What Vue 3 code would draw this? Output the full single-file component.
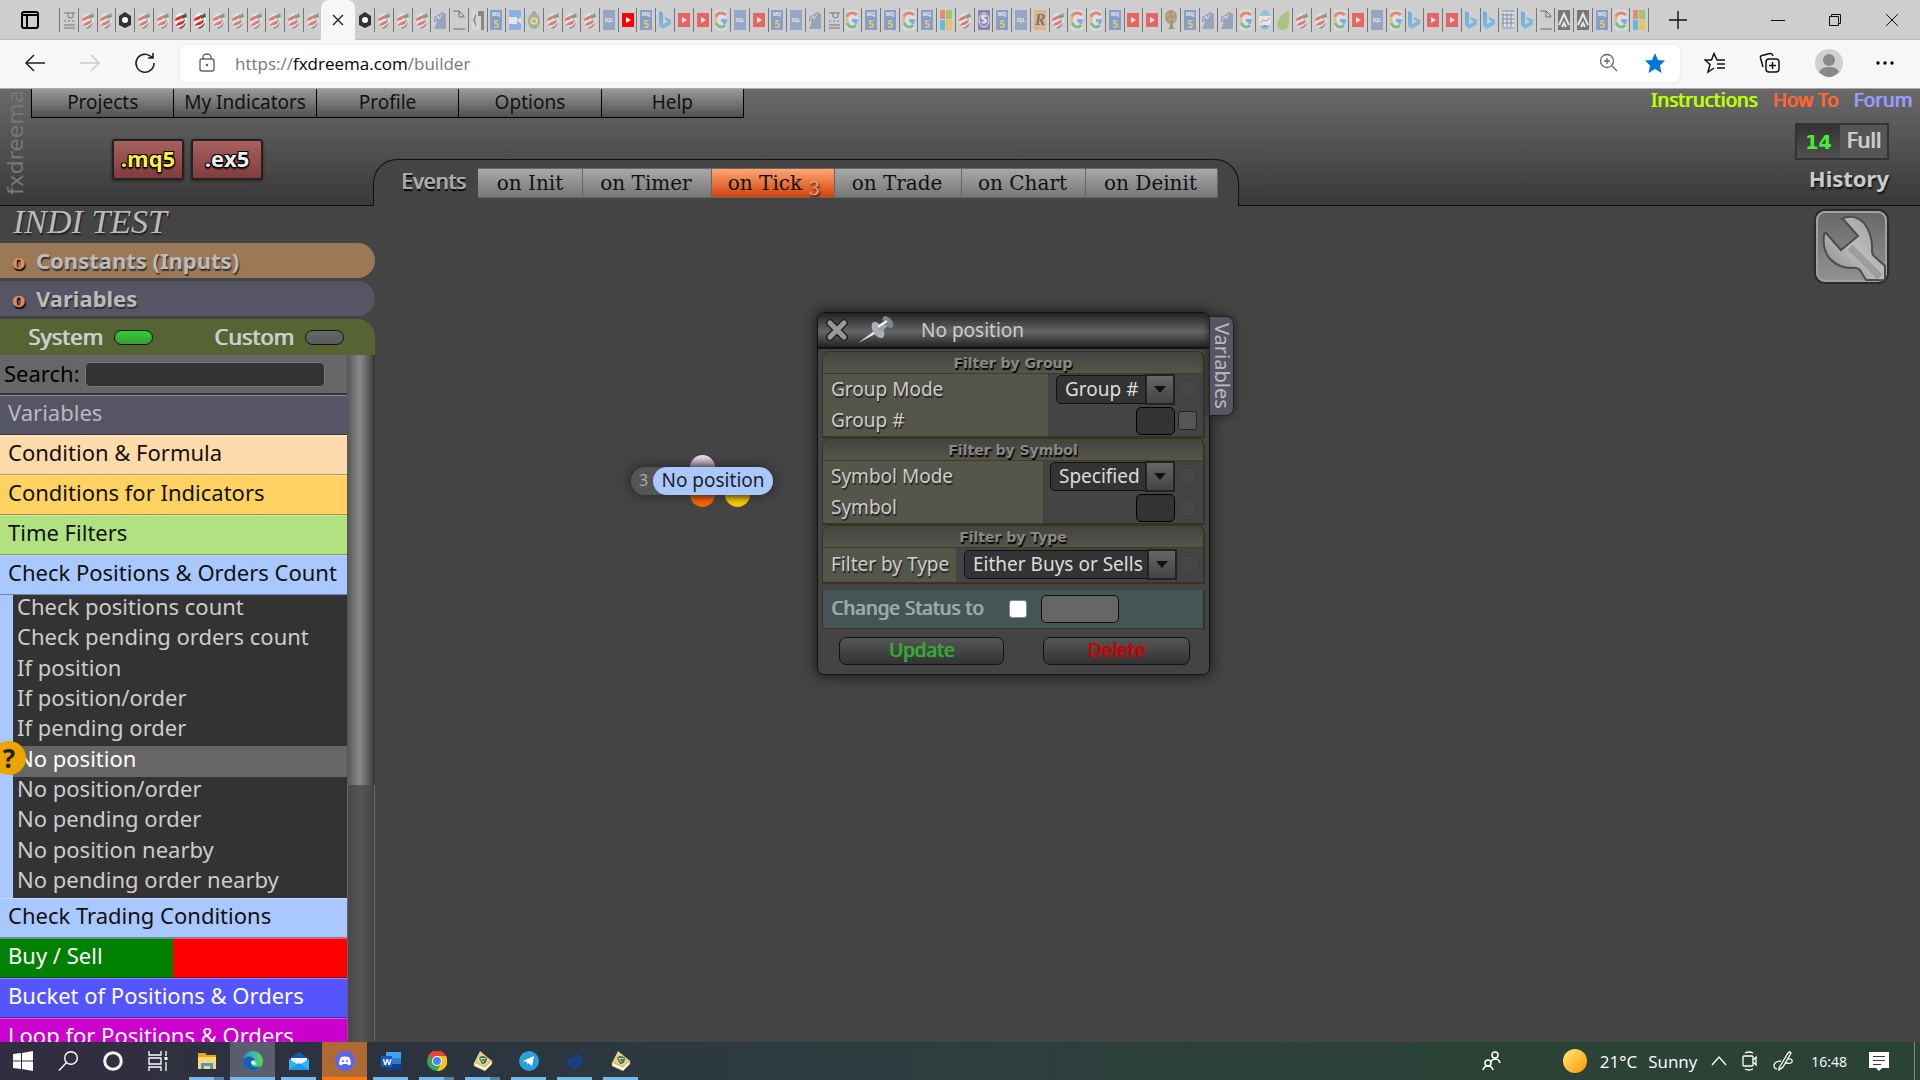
<script setup>
import { ref } from 'vue'

const before = 'pi s s ring s s S S s s s s s s'.split(' ')
const after = ('ring s s s horse doc dev mq5 cam snail s s s mql YT ' +
  'mq5 bing yt yt g mql yt mq5 mql horse pi g mq5 mq5 g mq5 ms s coin mq5 mql rr s g g mq5 yt yt tree mq5 horse horse g chart ' +
  'leaf s s g yt mql g bing yt yt bing bing sheet bing doc aa aa mq5 g ms').split(' ')
const bright = ['ring', 'S', 'YT']

const menu = ['Projects', 'My Indicators', 'Profile', 'Options', 'Help']
const events = [
  { name: 'on Init', cls: 'w-init' },
  { name: 'on Timer', cls: 'w-timer' },
  { name: 'on Tick', cls: 'w-tick', count: 3 },
  { name: 'on Trade', cls: 'w-trade' },
  { name: 'on Chart', cls: 'w-chart' },
  { name: 'on Deinit', cls: 'w-deinit' },
]
const current = ref('on Tick')

const topGroups = [
  { name: 'Variables', cls: 'c-var' },
  { name: 'Condition & Formula', cls: 'c-formula' },
  { name: 'Conditions for Indicators', cls: 'c-indi' },
  { name: 'Time Filters', cls: 'c-time' },
  { name: 'Check Positions & Orders Count', cls: 'c-check' },
]
const blocks = ['Check positions count', 'Check pending orders count', 'If position', 'If position/order', 'If pending order',
  'No position', 'No position/order', 'No pending order', 'No position nearby', 'No pending order nearby']
const selected = ref('No position')
const bottomGroups = [
  { name: 'Check Trading Conditions', cls: 'c-check' },
  { name: 'Buy / Sell', cls: 'c-buysell' },
  { name: 'Bucket of Positions & Orders', cls: 'c-bucket' },
  { name: 'Loop for Positions & Orders', cls: 'c-loop' },
]

const apps = [
  { id: 'explorer', name: 'File Explorer', stacked: true },
  { id: 'edge', name: 'Microsoft Edge', cls: 'active' },
  { id: 'mail', name: 'Mail' },
  { id: 'discord', name: 'Discord', cls: 'alert' },
  { id: 'word', name: 'Word' },
  { id: 'chrome', name: 'Chrome', stacked: true },
  { id: 'mt', name: 'MetaEditor', stacked: true },
  { id: 'telegram', name: 'Telegram' },
  { id: 'diamond', name: 'TeamViewer' },
  { id: 'mt', name: 'MetaEditor' },
]
</script>

<template>
  <div class="screen">
    <svg class="defs" aria-hidden="true">
      <defs>
        <linearGradient id="gEdge" x1="0" y1="0" x2="1" y2="0"><stop offset="0" stop-color="#1b9de2" /><stop offset="1" stop-color="#5fd75a" /></linearGradient>
        <linearGradient id="gSun" x1="0" y1="0" x2="1" y2="1"><stop offset="0" stop-color="#ffe97a" /><stop offset="1" stop-color="#ff9800" /></linearGradient>
        <linearGradient id="gBing" x1="0" y1="0" x2="0" y2="1"><stop offset="0" stop-color="#1a7fe8" /><stop offset="1" stop-color="#2bb8f5" /></linearGradient>
        <linearGradient id="gWr" x1="0" y1="0" x2="0" y2="1"><stop offset="0" stop-color="#686868" /><stop offset="1" stop-color="#929292" /></linearGradient>
        <linearGradient id="gMetal" x1="0" y1="1" x2="1" y2="0"><stop offset="0" stop-color="#808080" /><stop offset="0.5" stop-color="#bcbcbc" /><stop offset="1" stop-color="#9a9a9a" /></linearGradient>
      </defs>
      <symbol id="t-s" viewBox="0 0 12 20">
        <ellipse cx="6" cy="11" rx="6" ry="8" fill="#f2f2f2" />
        <path d="M0 10C1 6 4 8 8 4C8 8 5 10 0 11Z" fill="#e8262a" /><path d="M7 6L11 3L12 7L7 9Z" fill="#1c7a34" />
        <path d="M1 15C4 11 7 12 10 9C10 13 7 15 1 16Z" fill="#e8262a" /><path d="M3 18C6 17 9 15 11 12Q11 17 6 19Z" fill="#666" />
      </symbol>
      <symbol id="t-ring" viewBox="0 0 12 20">
        <path d="M0 6L6 2L12 6V15L6 18L0 15Z" fill="#333" /><circle cx="6" cy="10" r="3" fill="#fff" />
      </symbol>
      <symbol id="t-pi" viewBox="0 0 12 20">
        <path d="M1 3H12M5 3V7Q8 9 10 7V3M1 11H3M5 11H7M9 11H11M1 15H12M1 18H12" fill="none" stroke="#222" stroke-width="1" />
      </symbol>
      <symbol id="t-horse" viewBox="0 0 12 20">
        <path d="M0 19C2 15 2 14 3 11L0 12V7L4 5L8 2L12 4V19Z" fill="#5f79a8" /><path d="M1 10L4 6L5 9L8 4" fill="none" stroke="#dfe6f2" stroke-width="1" />
      </symbol>
      <symbol id="t-doc" viewBox="0 0 12 20">
        <path d="M0 1H6L11 6V7H6V1M0 19H12" fill="none" stroke="#111" stroke-width="1" />
      </symbol>
      <symbol id="t-dev" viewBox="0 0 12 20">
        <path d="M0 0H12V20H0Z" fill="#ddd" /><path d="M4 3L1 10L4 17V14L3 10L4 6ZM6 1H12V20H9V6H6Z" fill="#444" />
      </symbol>
      <symbol id="t-mq5" viewBox="0 0 12 20">
        <path d="M0 0H12V20H0Z" fill="#3f74c4" /><text x="6" y="6" text-anchor="middle" font-size="5" font-weight="700" fill="#fff">MQ</text><text x="6" y="18" text-anchor="middle" font-size="10" font-weight="700" fill="#f5c400">5</text>
      </symbol>
      <symbol id="t-mql" viewBox="0 0 12 20">
        <path d="M0 0H12V20H0Z" fill="#5b80bc" /><text x="6" y="12" text-anchor="middle" font-size="5" font-weight="700" fill="#fff">IQL</text>
      </symbol>
      <symbol id="t-cam" viewBox="0 0 12 20">
        <path d="M0 0H12V20H0Z" fill="#4c96f5" /><path d="M0 7H8V14H0ZM8 10L12 7V14Z" fill="#fff" />
      </symbol>
      <symbol id="t-snail" viewBox="0 0 12 20">
        <ellipse cx="6" cy="11" rx="6" ry="8" fill="#6f9c6b" /><circle cx="6" cy="11" r="4" fill="#f7efc8" stroke="#d89b2e" stroke-width="1" /><circle cx="6" cy="3" r="2" fill="#4f8f4f" /><circle cx="6" cy="11" r="2" fill="#c98a28" />
      </symbol>
      <symbol id="t-yt" viewBox="0 0 12 20">
        <path d="M0 3H12V17H0Z" fill="#f00" /><path d="M4 7L9 10L4 13Z" fill="#fff" />
      </symbol>
      <symbol id="t-bing" viewBox="0 0 12 20">
        <path d="M0 1L4 3V14L9 12L6 9V7L12 10V14L4 19L0 16Z" fill="url(#gBing)" />
      </symbol>
      <symbol id="t-g" viewBox="0 0 12 20">
        <rect width="12" height="20" rx="3" fill="#efefef" />
        <path d="M1 7Q2 3 6 3Q9 3 11 5" fill="none" stroke="#ea4335" stroke-width="3" /><path d="M1 7Q0 10 1 13" fill="none" stroke="#fbbc05" stroke-width="3" />
        <path d="M1 13Q3 17 6 17Q9 17 10 15" fill="none" stroke="#34a853" stroke-width="3" /><path d="M6 9H12Q12 13 10 15L8 13V12H6Z" fill="#4285f4" />
      </symbol>
      <symbol id="t-ms" viewBox="0 0 12 20">
        <path d="M0 0H5V9H0Z" fill="#f25022" /><path d="M6 0H12V9H6Z" fill="#7fba00" /><path d="M0 10H5V20H0Z" fill="#00a4ef" /><path d="M6 10H12V20H6Z" fill="#ffb900" />
      </symbol>
      <symbol id="t-coin" viewBox="0 0 12 20">
        <path d="M0 0H12V20H0Z" fill="#4a3f9e" /><ellipse cx="6" cy="10" rx="5" ry="7" fill="none" stroke="#fff" /><text x="6" y="14" text-anchor="middle" font-size="12" font-weight="700" fill="#fff">$</text>
      </symbol>
      <symbol id="t-rr" viewBox="0 0 12 20">
        <path d="M0 0H12V20H0Z" fill="#f79a3c" /><text x="6" y="15" text-anchor="middle" font-size="16" font-weight="700" font-style="italic" font-family="Liberation Serif, serif" fill="#222">R</text>
      </symbol>
      <symbol id="t-tree" viewBox="0 0 12 20">
        <ellipse cx="6" cy="7" rx="6" ry="7" fill="#8a6a2e" /><path d="M5 12H8V17L10 19H3L5 17Z" fill="#7a5a24" /><path d="M2 5H4M7 4H9M4 9H6M8 9H10" stroke="#d0b878" />
      </symbol>
      <symbol id="t-chart" viewBox="0 0 12 20">
        <ellipse cx="6" cy="10" rx="6" ry="10" fill="#58bfe0" /><path d="M0 6H12V15H0Z" fill="#fff" /><path d="M1 13L4 10L7 11L11 8" fill="none" stroke="#e33" /><path d="M4 18L6 15L8 18" fill="none" stroke="#334" />
      </symbol>
      <symbol id="t-leaf" viewBox="0 0 12 20">
        <path d="M12 0V14Q11 20 6 20Q0 20 0 15Q1 6 12 0Z" fill="#84bd3c" />
      </symbol>
      <symbol id="t-sheet" viewBox="0 0 12 20">
        <path d="M0 1H12V19H0Z" fill="#eee" /><path d="M0 1H12M0 5H12M0 9H12M0 13H12M0 18H12M1 3V17M5 3V17M9 3V17" stroke="#274a80" stroke-width="1" />
      </symbol>
      <symbol id="t-aa" viewBox="0 0 12 20">
        <path d="M0 0H12V20H0Z" fill="#222" /><path d="M1 15L6 4L11 15M4 17L6 13L8 17" fill="none" stroke="#fff" stroke-width="2" />
      </symbol>

      <symbol id="a-explorer" viewBox="0 0 20 20"><path d="M1 2H8L10 4H19V17H1Z" fill="#e9a81c" /><path d="M1 6H19V18H1Z" fill="#ffd867" /><path d="M4 18V12H16V18H13V15H7V18Z" fill="#3f9ae0" /></symbol>
      <symbol id="a-edge" viewBox="0 0 20 20"><circle cx="10" cy="10" r="10" fill="url(#gEdge)" /><path d="M0 10C1 4 11 4 12 10C11 9 8 9 8 12C8 16 13 17 18 15C15 20 9 21 5 18C1 16 0 13 0 10Z" fill="#1660b4" /><path d="M12 10C10 9 8 10 8 12C9 14 12 14 14 13C13 13 12 12 12 10Z" fill="#dff3ff" /></symbol>
      <symbol id="a-mail" viewBox="0 0 20 20"><path d="M0 8L10 1L20 8V18H0Z" fill="#0f5fae" /><path d="M2 7H18V14H2Z" fill="#f3f7fb" /><path d="M0 8L10 14L20 8V19H0Z" fill="#31b4f2" /><path d="M0 19L10 12L20 19Z" fill="#1a97e6" /></symbol>
      <symbol id="a-discord" viewBox="0 0 20 20"><circle cx="10" cy="10" r="10" fill="#5865f2" /><path d="M6 6Q10 5 14 6Q16 9 16 13Q14 15 13 14L12 13H8L7 14Q6 15 4 13Q4 9 6 6Z" fill="#fff" /><circle cx="8" cy="10" r="1" fill="#5865f2" /><circle cx="12" cy="10" r="1" fill="#5865f2" /></symbol>
      <symbol id="a-word" viewBox="0 0 20 20"><path d="M5 1H20V7H5Z" fill="#41a5ee" /><path d="M5 7H20V13H5Z" fill="#2b7cd3" /><path d="M5 13H20V19H5Z" fill="#103f91" /><path d="M0 5H11V16H0Z" fill="#185abd" /><text x="6" y="14" text-anchor="middle" font-size="9" font-weight="700" fill="#fff">W</text></symbol>
      <symbol id="a-chrome" viewBox="0 0 20 20"><circle cx="10" cy="10" r="10" fill="#34a853" /><path d="M10 10L1 5A10 10 0 0 1 19 5Z" fill="#ea4335" /><path d="M10 5H19A10 10 0 0 1 10 20L14 12Z" fill="#fbc116" /><circle cx="10" cy="10" r="5" fill="#fff" /><circle cx="10" cy="10" r="4" fill="#4285f4" /></symbol>
      <symbol id="a-mt" viewBox="0 0 20 20"><path d="M1 12L7 0L19 10L12 19Z" fill="#e6cf8b" /><path d="M1 11L12 16L19 9L19 13L12 20L1 15Z" fill="#fff6d8" stroke="#9b7c32" stroke-width="0.5" /><path d="M6 7Q9 3 14 7Q14 13 9 13Z" fill="#2f6d6a" /><path d="M7 7L13 7L10 12Z" fill="#f4d84c" /><path d="M9 8L12 8L10 11Z" fill="#2f6d6a" /></symbol>
      <symbol id="a-telegram" viewBox="0 0 20 20"><circle cx="10" cy="10" r="10" fill="#2a9fdc" /><path d="M4 10L15 5L13 15L9 12L8 14L8 11Z" fill="#fff" /></symbol>
      <symbol id="a-diamond" viewBox="0 0 20 20"><path d="M10 3L17 9L14 12L10 8L5 12M2 10L10 17L17 11M6 7L3 10" fill="none" stroke="#14408f" stroke-width="3" /></symbol>
    </svg>

    <header class="tabstrip">
      <button class="tab-actions" aria-label="Tab actions">
        <svg width="18" height="18" viewBox="0 0 18 18"><rect x="1" y="1" width="16" height="16" rx="2" fill="none" stroke="#000" stroke-width="2" /><path d="M1 4H17M6 4V17" stroke="#000" stroke-width="2" /></svg>
      </button>
      <div class="tabs before">
        <button v-for="(t, i) in before" :key="i" class="tab" aria-label="Tab"><svg width="12" height="20" :class="{ dim: !bright.includes(t) }"><use :href="'#t-' + t.toLowerCase()" /></svg></button>
      </div>
      <div class="tab-current">
        <button aria-label="Close tab"><svg width="12" height="12" viewBox="0 0 12 12"><path d="M1 1L11 11M11 1L1 11" stroke="#222" stroke-width="1.4" /></svg></button>
      </div>
      <div class="tabs after">
        <button v-for="(t, i) in after" :key="i" class="tab" aria-label="Tab"><svg width="12" height="20" :class="{ dim: !bright.includes(t) }"><use :href="'#t-' + t.toLowerCase()" /></svg></button>
      </div>
      <button class="new-tab" aria-label="New tab"><svg width="18" height="18" viewBox="0 0 18 18"><path d="M9 0V18M0 9H18" stroke="#111" stroke-width="1.4" /></svg></button>
      <div class="win">
        <button aria-label="Minimize"><svg width="14" height="14"><path d="M0 7.5H14" stroke="#111" /></svg></button>
        <button aria-label="Restore"><svg width="14" height="14"><path d="M1.5 3.5H10.5V12.5H1.5ZM3.5 3V1.5H12.5V10.5H11" fill="none" stroke="#111" /></svg></button>
        <button aria-label="Close"><svg width="14" height="14"><path d="M1 1L13 13M13 1L1 13" stroke="#111" /></svg></button>
      </div>
    </header>

    <div class="addressbar">
      <button aria-label="Back"><svg width="22" height="20" viewBox="0 0 22 20"><path d="M10 2L2 10L10 18M2 10H21" fill="none" stroke="#222" stroke-width="1.5" /></svg></button>
      <button aria-label="Forward"><svg width="22" height="20" viewBox="0 0 22 20"><path d="M12 2L20 10L12 18M20 10H1" fill="none" stroke="#ccc" stroke-width="1.5" /></svg></button>
      <button aria-label="Refresh"><svg width="22" height="22" viewBox="0 0 22 22"><path d="M20 11A9 9 0 1 1 17 4.5L19 6M19 1V6H14" fill="none" stroke="#222" stroke-width="1.6" /></svg></button>
      <div class="url">
        <svg width="18" height="20" viewBox="0 0 18 20"><rect x="2" y="6" width="14" height="12" rx="2" fill="none" stroke="#666" stroke-width="1.4" /><path d="M5 6V4A4 3 0 0 1 13 4V6" fill="none" stroke="#666" stroke-width="1.4" /><circle cx="9" cy="12" r="1.3" fill="#666" /></svg>
        <a class="addr" href="https://fxdreema.com/builder">https://<b>fxdreema.com</b>/builder</a>
        <button aria-label="Zoom"><svg width="20" height="20" viewBox="0 0 20 20"><circle cx="8" cy="8" r="6.5" fill="none" stroke="#666" stroke-width="1.3" /><path d="M13 13L18 18M5 8H11M8 5V11" stroke="#666" stroke-width="1.3" /></svg></button>
        <button aria-label="Favourite"><svg width="22" height="22" viewBox="0 0 22 22"><path d="M11 1L14 8L21 8.5L16 13.5L17.5 21L11 17L4.5 21L6 13.5L1 8.5L8 8Z" fill="#0078d7" /></svg></button>
      </div>
      <div class="tools">
        <button aria-label="Favourites"><svg width="22" height="22" viewBox="0 0 22 22"><path d="M21 8H13L10 1.5L7.5 8H1L6 12.500L4 20L10 16M13 12H21M13 16H21" fill="none" stroke="#111" stroke-width="1.5" /></svg></button>
        <button aria-label="Collections"><svg width="22" height="22" viewBox="0 0 22 22"><rect x="7" y="7" width="13" height="13" rx="3" fill="none" stroke="#111" stroke-width="1.5" /><path d="M13.5 10V17M10 13.5H17M4 15L1.5 6Q1 4 3 3.5L11 1.5Q13 1 14 4" fill="none" stroke="#111" stroke-width="1.5" /></svg></button>
        <button aria-label="Profile"><svg width="28" height="28" viewBox="0 0 28 28"><circle cx="14" cy="14" r="14" fill="#d2d0ce" /><circle cx="14" cy="11" r="6" fill="#8a8886" /><path d="M4 23Q6 18 14 18Q22 18 24 23Q14 33 4 23Z" fill="#8a8886" /></svg></button>
        <button aria-label="More"><svg width="18" height="4"><circle cx="2" cy="2" r="1.7" /><circle cx="9" cy="2" r="1.7" /><circle cx="16" cy="2" r="1.7" /></svg></button>
      </div>
    </div>

    <main class="app">
      <header class="head">
        <div class="brand">fxdreema</div>
        <div class="head-main">
          <div class="head-top">
            <nav class="menu"><button v-for="m in menu" :key="m">{{ m }}</button></nav>
            <nav class="links"><a class="l-ins" href="#instructions">Instructions</a><a class="l-how" href="#howto">How To</a><a class="l-for" href="#forum">Forum</a></nav>
          </div>
          <div class="head-row">
            <div class="compile"><button class="mq">.mq5</button><button class="ex">.ex5</button></div>
            <div class="events">
              <span class="events-title">Events</span>
              <button v-for="e in events" :key="e.name" :class="[e.cls, { on: current === e.name }]" @click="current = e.name">{{ e.name }}<sub v-if="e.count">{{ e.count }}</sub></button>
            </div>
            <div class="status">
              <div class="full"><b>14</b><span>Full</span></div>
              <a href="#history">History</a>
            </div>
          </div>
        </div>
      </header>

      <div class="body">
        <aside class="side">
          <h1>INDI TEST</h1>
          <button class="bar inputs"><i>o</i>Constants (Inputs)</button>
          <button class="bar vars"><i>o</i>Variables</button>
          <div class="switches">
            <label>System<input type="checkbox" checked /></label>
            <label class="custom">Custom<input type="checkbox" /></label>
          </div>
          <div class="side-scroll">
            <div class="list">
              <div class="search"><label for="q">Search:</label><input id="q" type="text" /></div>
              <button v-for="g in topGroups" :key="g.name" class="group" :class="g.cls">{{ g.name }}</button>
              <div class="sub">
                <button v-for="b in blocks" :key="b" :class="{ sel: b === selected }" @click="selected = b">{{ b }}<span v-if="b === selected" class="hint"><svg width="36" height="36" viewBox="0 0 36 36"><circle cx="18" cy="18" r="17" fill="#eba500" /></svg><em>?</em></span></button>
              </div>
              <button v-for="g in bottomGroups" :key="g.name" class="group" :class="g.cls">{{ g.name }}</button>
            </div>
            <div class="scrollbar"><div class="thumb"></div></div>
          </div>
        </aside>

        <section class="canvas">
          <button class="wrench" aria-label="Tools">
            <svg width="75" height="75" viewBox="0 0 75 75">
              <rect x="1" y="1" width="73" height="73" rx="10" fill="#666" stroke="#2b2b2b" stroke-width="2" />
              <rect x="3" y="3" width="69" height="69" rx="8" fill="url(#gWr)" stroke="#a2a2a2" stroke-width="2" />
              <path d="M27 10Q40 4 50 14Q59 26 58 42Q58 46 61 48L71 57V70Q70 72 64 71L52 71L46 61Q43 58 38 59Q25 59 16 50Q8 40 10 26Q10 24 12 24L27 41L44 27L30 11Q28 10 27 10Z" fill="url(#gMetal)" stroke="#4c4c4c" stroke-width="2" />
              <path d="M36 38L66 68" stroke="#8b8b8b" stroke-width="7" opacity="0.6" />
            </svg>
          </button>

          <div class="node">
            <i class="nub in"></i><i class="nub yes"></i><i class="nub no"></i>
            <div class="node-body"><span class="num">3</span><span class="cap">No position</span></div>
          </div>

          <form class="panel" @submit.prevent>
            <button class="vtab" type="button">Variables</button>
            <div class="panel-head">
              <button type="button" aria-label="Close"><svg width="24" height="24" viewBox="0 0 24 24"><path d="M5 5L19 19M19 5L5 19" stroke="#222" stroke-width="8" stroke-linecap="round" /><path d="M5 5L19 19M19 5L5 19" stroke="#999" stroke-width="5" stroke-linecap="round" /></svg></button>
              <button type="button" aria-label="Pin"><svg width="38" height="28" viewBox="0 0 38 28"><path d="M1 27L20 13L22 16Z" fill="#e8e8e8" /><ellipse cx="21" cy="14" rx="5" ry="9" fill="#a9b2b9" transform="rotate(-32 21 14)" /><path d="M19 11L28 4L32 9L24 16Z" fill="#9aa3aa" /><ellipse cx="31" cy="6" rx="4" ry="7" fill="#7c858c" transform="rotate(-40 31 6)" /><path d="M21 11L30 5" stroke="#fff" stroke-width="2" /></svg></button>
              <strong>No position</strong>
            </div>
            <fieldset class="sec">
              <legend>Filter by Group</legend>
              <div class="two w226">
                <div class="labels"><label for="gm">Group Mode</label><label for="gn">Group #</label></div>
                <div class="vals">
                  <div class="val"><span class="combo s-g"><select id="gm"><option>Group #</option></select><i></i></span><input type="checkbox" class="mini off" aria-label="Group Mode variable" /></div>
                  <div class="val"><input id="gn" type="text" class="txt" /><input type="checkbox" class="mini" aria-label="Group # variable" /></div>
                </div>
              </div>
            </fieldset>
            <fieldset class="sec">
              <legend>Filter by Symbol</legend>
              <div class="two w221">
                <div class="labels"><label for="sm">Symbol Mode</label><label for="sy">Symbol</label></div>
                <div class="vals">
                  <div class="val"><span class="combo s-s"><select id="sm"><option>Specified</option></select><i></i></span><input type="checkbox" class="mini off" aria-label="Symbol Mode variable" /></div>
                  <div class="val"><input id="sy" type="text" class="txt" /><input type="checkbox" class="mini off" aria-label="Symbol variable" /></div>
                </div>
              </div>
            </fieldset>
            <fieldset class="sec">
              <legend>Filter by Type</legend>
              <div class="two w134">
                <div class="labels"><label for="ft">Filter by Type</label></div>
                <div class="vals">
                  <div class="val"><span class="combo s-t"><select id="ft"><option>Either Buys or Sells</option></select><i></i></span><input type="checkbox" class="mini off" aria-label="Filter by Type variable" /></div>
                </div>
              </div>
            </fieldset>
            <div class="change"><label for="cs">Change Status to</label><input id="cs" type="checkbox" /><input type="text" aria-label="Status" /></div>
            <div class="actions"><button class="upd">Update</button><button class="del" type="button">Delete</button></div>
          </form>
        </section>
      </div>
    </main>

    <footer class="taskbar">
      <div class="sys">
        <button aria-label="Start"><svg width="20" height="20" viewBox="0 0 20 20" fill="#fff"><path d="M0 3L8 2V9.5H0ZM9 2L20 0V9.5H9ZM0 10.5H8V18L0 17ZM9 10.5H20V20L9 18Z" /></svg></button>
        <button aria-label="Search"><svg width="20" height="20" viewBox="0 0 20 20" fill="none" stroke="#fff" stroke-width="1.4"><circle cx="13" cy="7" r="6.3" /><path d="M8.5 11.5L1 19.5" /></svg></button>
        <button aria-label="Cortana"><svg width="20" height="20" viewBox="0 0 20 20" fill="none" stroke="#f4f4f4" stroke-width="3"><circle cx="10" cy="10" r="8.3" /></svg></button>
        <button aria-label="Task view"><svg width="20" height="20" viewBox="0 0 20 20" fill="none" stroke="#fff" stroke-width="1.3"><path d="M1 0V4H13V0M1 20V16H13V20M1 7H13V13H1ZM18 0V5M18 11V20" /><path d="M16.5 6H19.5V9H16.5Z" fill="#fff" stroke="none" /></svg></button>
      </div>
      <div class="apps">
        <button v-for="(a, i) in apps" :key="i" :class="[a.cls, { stacked: a.stacked }]" :aria-label="a.name"><svg width="20" height="20"><use :href="'#a-' + a.id" /></svg></button>
      </div>
      <div class="tray">
        <svg class="people" width="20" height="20" viewBox="0 0 20 20" fill="none" stroke="#fff" stroke-width="1.5"><circle cx="13" cy="4" r="3" /><path d="M9 11Q10 8 13 8Q17 8 18 12" /><circle cx="6" cy="12" r="3" /><path d="M1 19Q2 15 6 15Q10 15 11 19" /></svg>
        <svg class="sun" width="24" height="24"><circle cx="12" cy="12" r="12" fill="url(#gSun)" /></svg>
        <span class="temp">21°C</span><span class="sky">Sunny</span>
        <svg class="chev" width="16" height="10" viewBox="0 0 16 10"><path d="M1 9L8 1L15 9" fill="none" stroke="#fff" stroke-width="1.3" /></svg>
        <svg class="meet" width="16" height="20" viewBox="0 0 16 20" fill="none" stroke="#fff" stroke-width="1.3"><rect x="1" y="5" width="10" height="10" rx="1" /><path d="M11 9L14 6V14L11 11M3 2Q7 0 11 2M3 18Q7 20 11 18" /></svg>
        <svg class="pen" width="21" height="20" viewBox="0 0 21 20" fill="none" stroke="#fff" stroke-width="1.3"><path d="M6 17L15 2Q17 0 18 2L10 16L6 19ZM8 10Q2 10 1 14Q1 18 4 18M14 8Q20 7 19 11Q18 13 13 12" /></svg>
        <time>16:48</time>
        <svg class="note" width="20" height="20" viewBox="0 0 20 20"><path d="M0 1H20V17H13L10 20L7 17H0Z" fill="#fff" /><path d="M4 5.5H16M4 9.5H16M4 13.5H12" stroke="#2b4237" stroke-width="1.2" /></svg>
        <span class="edge-line"></span>
      </div>
    </footer>
  </div>
</template>

<style>
body { background: #444; }
</style>

<style scoped>
.screen { height: 100vh; display: flex; flex-direction: column; overflow: hidden; font-family: "Noto Sans", "Open Sans", sans-serif; }
.screen * { box-sizing: border-box; }
.defs { position: absolute; width: 0; height: 0; }
button { font: inherit; border: 0; background: none; padding: 0; margin: 0; color: inherit; cursor: pointer; }
svg { display: block; flex: none; }
a { text-decoration: none; color: inherit; }
input, select { font: inherit; margin: 0; }

.tabstrip { height: 40px; flex: none; background: #cecece; display: flex; align-items: stretch; border-bottom: 1px solid #bcbcbc; }
.tab-actions { width: 59px; display: flex; align-items: center; justify-content: center; }
.tabs { display: flex; }
.tabs.before { flex: 14; }
.tabs.after { flex: 69; }
.tab { flex: 1; min-width: 0; height: 24px; margin-top: 8px; border-left: 1px solid #777; display: flex; align-items: center; justify-content: center; }
.after .tab:first-child { border-left-color: transparent; }
.after .tab:last-child { border-right: 1px solid #777; }
.dim { opacity: 0.5; }
.tab-current { width: 34px; background: #f7f7f7; border-radius: 8px 8px 0 0; display: flex; align-items: center; justify-content: center; margin-bottom: -1px; }
.new-tab { width: 58px; display: flex; justify-content: center; align-items: center; }
.win { display: flex; width: 213px; padding-left: 42px; }
.win button { flex: 1; display: flex; justify-content: center; align-items: center; }

.addressbar { height: 49px; flex: none; background: #f7f7f7; display: flex; align-items: center; border-bottom: 1px solid #aaa; padding: 0 0 2px 7px; }
.addressbar > button { width: 55px; display: flex; justify-content: center; }
.url { flex: 1; height: 37px; margin-left: 8px; background: #fff; border-radius: 6px; display: flex; align-items: center; padding: 0 14px 0 18px; box-shadow: 0 0 3px #ddd; }
.addr { flex: 1; margin-left: 19px; color: #777; font: 17px "Open Sans", "Noto Sans", sans-serif; }
.addr b { font-weight: 400; color: #000; }
.url button + button { margin-left: 25px; }
.tools { width: 240px; display: flex; align-items: center; justify-content: space-between; padding: 0 26px 0 24px; }

.app { flex: 1; min-height: 0; display: flex; flex-direction: column; background: #444; }
.head { flex: none; height: 117px; display: flex; background: linear-gradient(#696969, #393939); border-bottom: 1px solid #111; }
.brand { width: 31px; writing-mode: vertical-rl; transform: rotate(180deg); font: 22px "DejaVu Sans", sans-serif; color: #777; line-height: 31px; padding-top: 10px; }
.head-main { flex: 1; display: flex; flex-direction: column; }
.head-top { display: flex; justify-content: space-between; }
.menu { display: flex; width: 713px; border-left: 1px solid #000; }
.menu button { flex: 1; height: 29px; border: solid #000; border-width: 0 1px 1px 0; background: linear-gradient(#999, #515151); font-size: 19px; line-height: 24px; padding-bottom: 2px; color: #111; white-space: nowrap; }
.links { display: flex; gap: 15px; padding-right: 8px; font-size: 19px; line-height: 22px; }
.l-ins { color: #bf0; text-shadow: 1px 0 #bf0; }
.l-how { color: #f63; text-shadow: 1px 0 #f63; }
.l-for { color: #99f; text-shadow: 1px 0 #99f; }
.head-row { flex: 1; display: flex; align-items: flex-start; }
.compile { width: 342px; padding: 21px 0 0 81px; display: flex; gap: 7px; }
.compile button { width: 72px; height: 41px; border: 2px solid #222; border-radius: 3px; background: linear-gradient(#a86060, #803c3c); font-size: 22px; font-weight: 700; line-height: 32px; padding-bottom: 4px; box-shadow: 0 1px 3px #222; text-shadow: 1px 1px #000, -1px -1px #000, 1px -1px #000, -1px 1px #000, 0 2px 2px #000; font-family: "Open Sans", sans-serif; }
.compile .mq { color: #fe4; }
.compile .ex { color: #eee; }
.events { align-self: flex-end; margin-bottom: -1px; height: 47px; background: #444; border: 1px solid #111; border-bottom: 0; border-radius: 24px 24px 0 0; display: flex; align-items: flex-start; padding: 8px 20px 0 27px; }
.events-title { width: 77px; font-size: 21px; line-height: 26px; color: #aaa; text-shadow: 1px 0 #aaa, 1px 2px 1px #000; }
.events button { position: relative; height: 30px; border: 1px solid #666; border-left: 0; background: linear-gradient(#a8a8a8, #777); font: 20px/28px "DejaVu Serif", "Liberation Serif", serif; color: #111; text-align: center; }
.events .w-init { width: 105px; }
.events .w-timer { width: 129px; padding-right: 2px; }
.events .w-tick { width: 123px; padding-right: 16px; }
.events .w-trade { width: 127px; padding-right: 2px; }
.events .w-chart { width: 124px; padding-right: 2px; }
.events .w-deinit { width: 132px; padding-right: 2px; }
.events .on { background: linear-gradient(#ffa676, #d04408); }
.events sub { position: absolute; right: 14px; top: 6px; font-size: 18px; line-height: 28px; color: #e8a27c; text-shadow: 1px 2px 2px #222; }
.status { margin-left: auto; padding: 5px 31px 0 0; display: flex; flex-direction: column; align-items: flex-end; font-size: 21px; color: #ccc; }
.full { display: flex; width: 94px; height: 37px; border: 2px solid #333; background: #555; line-height: 31px; }
.full b { width: 43px; background: linear-gradient(#333, #505050); color: #4e3; font: 700 19px/34px "DejaVu Sans", sans-serif; text-align: center; }
.full span { flex: 1; text-align: center; text-shadow: 1px 0 #ccc; }
.status a { font-weight: 700; font-size: 22px; line-height: 36px; text-shadow: 1px 2px 2px #111; }

.body { flex: 1; min-height: 0; display: flex; }
.side { width: 375px; flex: none; display: flex; flex-direction: column; }
h1 { margin: 0; height: 37px; flex: none; padding-left: 13px; font: italic 400 34px/31px "Liberation Serif", serif; color: #bbb; text-shadow: 1px 2px 1px #222; }
.bar { text-align: left; height: 35px; flex: none; border-radius: 0 18px 18px 0; margin-bottom: 3px; padding-left: 12px; color: #bbb; font: 700 22px/33px "Noto Sans", sans-serif; text-shadow: 1px 2px 1px #333; }
.bar i { display: inline-block; width: 24px; font: 700 20px "DejaVu Serif", serif; color: #d98e66; text-shadow: 1px 2px 1px #000; }
.inputs { background: #9b7856; }
.vars { background: #555565; }
.switches { height: 36px; flex: none; background: #556432; border-radius: 0 18px 0 0; display: flex; padding: 0 0 3px 28px; color: #ccc; font-size: 22px; line-height: 30px; text-shadow: 1px 0 #ccc; }
.switches label { width: 186px; display: flex; align-items: center; gap: 11px; }
.switches label.custom { width: auto; }
.switches input { appearance: none; width: 39px; height: 15px; border: 1px solid #111; border-radius: 8px; background: linear-gradient(#666, #5a5a5a); margin-top: 3px; }
.switches input:checked { background: linear-gradient(#32cd32, #3a9a3a); }
.side-scroll { flex: 1; min-height: 0; display: flex; }
.list { width: 347px; overflow: hidden; display: flex; flex-direction: column; }
.search { height: 40px; flex: none; background: #666; border-bottom: 2px solid #333; display: flex; align-items: center; padding-left: 4px; font-size: 22px; line-height: 28px; color: #000; }
.search label { width: 81px; padding-bottom: 3px; }
.search input { width: 240px; height: 25px; background: #333; border: 1px solid #777; border-radius: 5px; color: #ccc; }
.group { flex: none; height: 40px; text-align: left; padding: 0 0 6px 8px; font-size: 22px; line-height: 32px; color: #111; border-top: 1px solid #ffffff55; border-bottom: 1px solid #00000055; white-space: nowrap; }
.c-var { background: #555565; color: #bbb; }
.c-formula { background: #ffdaaa; }
.c-indi { background: #ffd261; }
.c-time { background: #b0e281; }
.c-check { background: #a9c8ff; }
.c-buysell { background: linear-gradient(to right, #008000 50%, #f00 50%); color: #fff; }
.c-bucket { background: #55f; color: #fff; }
.c-loop { background: #c0c; color: #fff; }
.sub { flex: none; height: 303px; background: #333; border-left: 13px solid #a9c8ff; display: flex; flex-direction: column; }
.sub button { position: relative; flex: 1; text-align: left; padding: 0 0 8px 4px; color: #ccc; font-size: 22px; line-height: 22px; white-space: nowrap; }
.sub .sel { background: #666; color: #fff; }
.hint { position: absolute; left: -22px; top: -6px; width: 36px; height: 36px; }
.hint em { position: absolute; left: 0; top: 0; width: 36px; text-align: center; font: 700 26px/36px "Open Sans", sans-serif; color: #222; }
.scrollbar { width: 28px; background: linear-gradient(to right, #484848, #555 50%, #444); border: solid #666; border-width: 0 1px; }
.thumb { height: 430px; margin: 0 -1px; background: linear-gradient(to right, #555, #888 45%, #777 60%, #333); }

.canvas { flex: 1; position: relative; min-width: 0; }
.wrench { position: absolute; right: 31px; top: 3px; }
.node { position: absolute; left: 256px; top: 261px; }
.node-body { position: relative; display: flex; height: 28px; border-radius: 14px; background: #555; box-shadow: 0 0 12px #222; }
.num { width: 22px; padding-left: 8px; color: #aaa; font-size: 16px; line-height: 27px; }
.cap { width: 120px; border-radius: 14px; background: #a9c8ff; color: #222; font-size: 19px; line-height: 26px; text-align: center; }
.nub { position: absolute; width: 25px; height: 25px; border-radius: 50%; }
.in { left: 59px; top: -12px; background: linear-gradient(#f7e6f8, #a898a8 50%); }
.yes { left: 59px; bottom: -12px; background: linear-gradient(#c40 50%, #f60 75%); }
.no { left: 94px; bottom: -12px; background: linear-gradient(#b90 50%, #fc0 75%); }

.panel { position: absolute; left: 442px; top: 106px; width: 393px; background: #444; border: 1px solid #111; border-radius: 7px; box-shadow: 0 0 14px #111; padding-bottom: 9px; color: #ccc; font-size: 19px; }
.vtab { position: absolute; left: 391px; top: 3px; width: 25px; height: 100px; border: 1px solid #222; border-radius: 0 8px 8px 0; background: #555565; color: #bbb; writing-mode: vertical-rl; line-height: 22px; font-size: 20px; box-shadow: 0 0 8px #222; }
.panel-head { height: 36px; border-radius: 6px 6px 0 0; border-bottom: 2px solid #111; background: linear-gradient(#222, #666 55%, #222); display: flex; align-items: center; padding-left: 7px; }
.panel-head button + button { margin-left: 8px; }
.panel-head strong { font-weight: 400; margin-left: 26px; line-height: 30px; }
.sec { margin: 2px 4px 0; padding: 0; border: solid #36361f; border-width: 1px 2px 2px 1px; border-radius: 8px 8px 0 0; min-width: 0; }
.sec + .sec { margin-top: 0; }
.sec legend { float: left; width: 100%; padding: 0; height: 22px; border-bottom: 1px solid #3d3d28; border-radius: 8px 8px 0 0; background: linear-gradient(#444440, #555548); text-align: center; font: 700 14px/22px "DejaVu Sans", sans-serif; color: #888; text-shadow: 1px 2px 1px #000; }
.two { clear: both; display: flex; }
.labels { background: #55564a; padding-left: 8px; display: flex; flex-direction: column; text-shadow: 1px 2px 1px #222; }
.labels label { height: 31px; line-height: 30px; white-space: nowrap; }
.w134 .labels label { height: 34px; line-height: 32px; }
.w226 .labels { width: 225px; }
.w221 .labels { width: 220px; }
.w134 .labels { width: 133px; }
.vals { flex: 1; padding-right: 6px; }
.w134 .vals { padding-right: 4px; }
.val { height: 31px; display: flex; align-items: center; justify-content: flex-end; gap: 3px; }
.w134 .val { height: 33px; }
.combo { position: relative; display: block; height: 29px; }
.combo select { appearance: none; width: 100%; height: 29px; border: 1px solid #111; border-radius: 5px 0 0 5px; background: #333; color: #ddd; padding: 0 0 1px 8px; }
.combo i { position: absolute; right: 0; top: -1px; width: 30px; height: 31px; border: 2px solid #222; background: linear-gradient(#666, #444); display: flex; align-items: center; justify-content: center; pointer-events: none; }
.combo i::after { content: ""; border: 6px solid transparent; border-top: 7px solid #111; border-bottom: 0; }
.s-g { width: 119px; }
.s-s { width: 125px; }
.s-t { width: 213px; }
.txt { width: 39px; height: 28px; border: 1px solid #000; border-radius: 5px; background: #333; color: #ddd; }
.mini { appearance: none; width: 19px; height: 19px; border: 1px solid #222; border-radius: 3px; background: #555; }
.mini.off { opacity: 0.12; }
.change { margin: 6px 4px 0; height: 39px; background: #455555; border: solid #36361f; border-width: 0 2px 1px 1px; display: flex; align-items: center; padding-left: 8px; color: #9aa; }
.change label { width: 178px; text-shadow: 1px 0 #9aa; padding-bottom: 2px; }
.change input[type="checkbox"] { appearance: none; width: 18px; height: 18px; background: #fff; border: 1px solid #888; border-radius: 3px; }
.change input[type="text"] { width: 78px; height: 28px; margin-left: 14px; border: 1px solid #111; border-radius: 5px; background: #666; }
.actions { display: flex; gap: 39px; padding: 8px 0 0 21px; }
.actions button { height: 28px; border: 1px solid #111; border-radius: 7px; background: linear-gradient(#555, #333); line-height: 24px; padding-bottom: 2px; }
.actions .upd { width: 165px; color: #3a3; text-shadow: 1px 0 #3a3; }
.actions .del { width: 147px; color: #c00; text-shadow: 1px 0 #c00; }

.taskbar { height: 38px; flex: none; display: flex; background: linear-gradient(to right, #322d41, #2b333f 20%, #2c3d3f 45%, #2b4237 75%, #2b4237); color: #fff; }
.sys { display: flex; width: 180px; }
.sys button { flex: 1; display: flex; align-items: center; justify-content: center; }
.apps { display: flex; gap: 1px; margin-left: 4px; }
.apps button { position: relative; width: 45px; display: flex; align-items: center; justify-content: center; }
.apps button::after { content: ""; position: absolute; left: 5px; right: 5px; bottom: 0; height: 3px; background: #76b9ed; }
.apps .stacked::after { background: linear-gradient(to right, #76b9ed 70%, #5483a8 70%); }
.apps .active { background: #5a5d6e; }
.apps .active::after { left: 0; right: 0; }
.apps .alert { background: #ae6a35; }
.apps .alert::after { left: 0; right: 0; background: #f70; }
.tray { margin-left: auto; display: flex; align-items: center; font: 17px "Open Sans", sans-serif; }
.sun { margin-left: 61px; }
.temp { margin-left: 13px; }
.sky { margin-left: 11px; }
.chev { margin-left: 14px; }
.meet { margin-left: 15px; }
.pen { margin-left: 15px; }
time { margin-left: 17px; font-size: 14px; }
.note { margin-left: 22px; }
.edge-line { margin-left: 25px; width: 6px; height: 38px; border-left: 1px solid #7b8a83; }
</style>
